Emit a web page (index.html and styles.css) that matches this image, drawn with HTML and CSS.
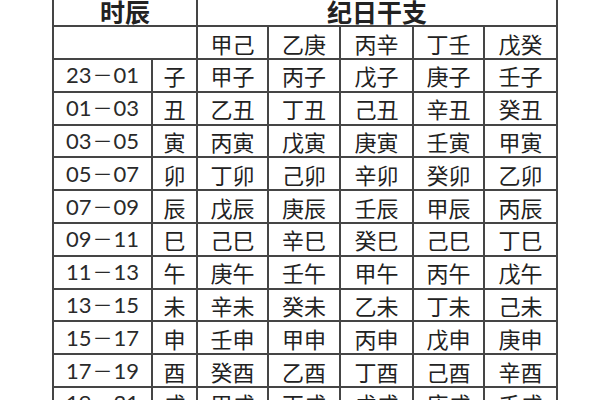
FILE: index.html
```html
<!DOCTYPE html>
<html lang="zh">
<head>
<meta charset="utf-8">
<link rel="stylesheet" href="styles.css">
</head>
<body>
<div class="sheet">
  <div class="cell head span2">时辰</div>
  <div class="cell head span5">纪日干支</div>
  <div class="cell span2"></div>
  <div class="cell">甲己</div><div class="cell">乙庚</div><div class="cell">丙辛</div><div class="cell">丁壬</div><div class="cell">戊癸</div>

  <div class="cell num">23<span class="dash">－</span>01</div><div class="cell">子</div><div class="cell">甲子</div><div class="cell">丙子</div><div class="cell">戊子</div><div class="cell">庚子</div><div class="cell">壬子</div>
  <div class="cell num">01<span class="dash">－</span>03</div><div class="cell">丑</div><div class="cell">乙丑</div><div class="cell">丁丑</div><div class="cell">己丑</div><div class="cell">辛丑</div><div class="cell">癸丑</div>
  <div class="cell num">03<span class="dash">－</span>05</div><div class="cell">寅</div><div class="cell">丙寅</div><div class="cell">戊寅</div><div class="cell">庚寅</div><div class="cell">壬寅</div><div class="cell">甲寅</div>
  <div class="cell num">05<span class="dash">－</span>07</div><div class="cell">卯</div><div class="cell">丁卯</div><div class="cell">己卯</div><div class="cell">辛卯</div><div class="cell">癸卯</div><div class="cell">乙卯</div>
  <div class="cell num">07<span class="dash">－</span>09</div><div class="cell">辰</div><div class="cell">戊辰</div><div class="cell">庚辰</div><div class="cell">壬辰</div><div class="cell">甲辰</div><div class="cell">丙辰</div>
  <div class="cell num">09<span class="dash">－</span>11</div><div class="cell">巳</div><div class="cell">己巳</div><div class="cell">辛巳</div><div class="cell">癸巳</div><div class="cell">己巳</div><div class="cell">丁巳</div>
  <div class="cell num">11<span class="dash">－</span>13</div><div class="cell">午</div><div class="cell">庚午</div><div class="cell">壬午</div><div class="cell">甲午</div><div class="cell">丙午</div><div class="cell">戊午</div>
  <div class="cell num">13<span class="dash">－</span>15</div><div class="cell">未</div><div class="cell">辛未</div><div class="cell">癸未</div><div class="cell">乙未</div><div class="cell">丁未</div><div class="cell">己未</div>
  <div class="cell num">15<span class="dash">－</span>17</div><div class="cell">申</div><div class="cell">壬申</div><div class="cell">甲申</div><div class="cell">丙申</div><div class="cell">戊申</div><div class="cell">庚申</div>
  <div class="cell num">17<span class="dash">－</span>19</div><div class="cell">酉</div><div class="cell">癸酉</div><div class="cell">乙酉</div><div class="cell">丁酉</div><div class="cell">己酉</div><div class="cell">辛酉</div>
  <div class="cell num">19<span class="dash">－</span>21</div><div class="cell">戌</div><div class="cell">甲戌</div><div class="cell">丙戌</div><div class="cell">戊戌</div><div class="cell">庚戌</div><div class="cell">壬戌</div>
</div>
</body>
</html>
```

FILE: styles.css
```css
html, body {
  margin: 0;
  padding: 0;
  background: #ffffff;
  overflow: hidden;
}

body {
  width: 600px;
  height: 400px;
  font-family: "Noto Sans CJK SC", "Noto Sans", sans-serif;
  color: #222222;
}

.sheet {
  display: grid;
  grid-template-columns: 97px 43px 69px 70px 71px 69px 71px;
  grid-template-rows: 31px 31px repeat(11, 30.8px);
  gap: 2px;
  padding: 2px;
  background: #454545;
  width: max-content;
  margin: -8px 0 0 52px;
}

.cell {
  background: #ffffff;
  display: flex;
  align-items: center;
  justify-content: center;
  font-size: 22px;
  line-height: 1;
  white-space: nowrap;
}

.span2 { grid-column: span 2; }
.span5 { grid-column: span 5; }

.head {
  font-size: 25px;
  font-weight: 700;
  padding-top: 3px;
}

.num {
  font-family: "Lato", "Open Sans", sans-serif;
  font-size: 22px;
  color: #2a2a2a;
}

.dash {
  font-family: "Noto Sans CJK SC", sans-serif;
  font-size: 20px;
  margin: 0 1px;
}
```
